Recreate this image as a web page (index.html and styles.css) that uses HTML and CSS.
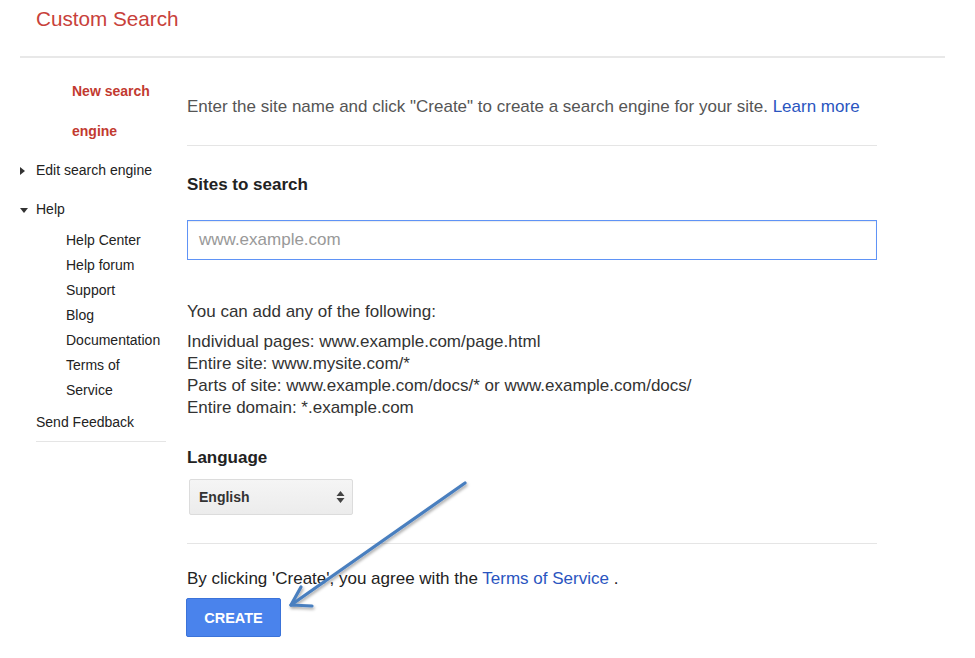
FILE: index.html
```html
<!DOCTYPE html>
<html>
<head>
<meta charset="utf-8">
<link rel="stylesheet" href="styles.css">
</head>
<body>
<header class="header">
  <h1 class="title">Custom Search</h1>
</header>
<div class="layout">
  <nav class="sidebar">
    <div class="nav-current">New search<br>engine</div>
    <div class="nav-item"><span class="tri tri-right"></span>Edit search engine</div>
    <div class="nav-item"><span class="tri tri-down"></span>Help</div>
    <ul class="subnav">
      <li>Help Center</li>
      <li>Help forum</li>
      <li>Support</li>
      <li>Blog</li>
      <li>Documentation</li>
      <li>Terms of<br>Service</li>
    </ul>
    <div class="nav-feedback">Send Feedback</div>
  </nav>
  <main class="main">
    <p class="intro">Enter the site name and click "Create" to create a search engine for your site. <a class="link" href="#">Learn more</a></p>
    <h2 class="label label-sites">Sites to search</h2>
    <div class="input">www.example.com</div>
    <p class="add-title">You can add any of the following:</p>
    <p class="examples">Individual pages: www.example.com/page.html<br>Entire site: www.mysite.com/*<br>Parts of site: www.example.com/docs/* or www.example.com/docs/<br>Entire domain: *.example.com</p>
    <h2 class="label label-lang">Language</h2>
    <div class="select"><span>English</span>
      <svg class="updown" width="9" height="14" viewBox="0 0 9 14"><path d="M4.5 1 L8.5 6 L0.5 6 Z M0.5 8 L8.5 8 L4.5 13 Z" fill="#444"/></svg>
    </div>
    <p class="agree">By clicking 'Create', you agree with the <a class="link" href="#">Terms of Service</a> .</p>
    <div class="button">CREATE</div>
  </main>
</div>
<svg class="arrow" width="975" height="658" viewBox="0 0 975 658">
  <defs>
    <filter id="sh" x="-20%" y="-20%" width="140%" height="140%">
      <feDropShadow dx="1" dy="2" stdDeviation="1.5" flood-color="#000" flood-opacity="0.35"/>
    </filter>
  </defs>
  <g filter="url(#sh)" stroke="#4a7fbf" stroke-width="3.2" fill="none" stroke-linecap="round" stroke-linejoin="round">
    <path d="M465 483 L291 605"/>
    <path d="M291 605 L301 587 M291 605 L312 606"/>
  </g>
</svg>
</body>
</html>
```
FILE: styles.css
```css
body {
  margin: 0;
  font-family: "Liberation Sans", Arial, sans-serif;
  background: #fff;
  color: #222;
}
.header {
  margin: 0 30px 0 20px;
  height: 56px;
  border-bottom: 2px solid #e8e8e8;
}
.title {
  margin: 0;
  padding: 7px 0 0 16px;
  font-size: 20.7px;
  font-weight: normal;
  color: #c8413a;
  line-height: 24px;
}
.layout {
  display: flex;
  padding-left: 20px;
}
.sidebar {
  width: 146px;
  padding-top: 13px;
  font-size: 14px;
  color: #222;
}
.nav-current {
  padding-left: 52px;
  color: #c23a30;
  font-weight: bold;
  line-height: 40px;
}
.nav-item {
  line-height: 39px;
  display: flex;
  align-items: center;
}
.tri {
  display: inline-block;
  width: 16px;
  height: 8px;
  position: relative;
}
.tri::before {
  content: "";
  position: absolute;
  left: 0;
  top: 0;
  border-style: solid;
}
.tri-right::before {
  border-width: 4px 0 4px 5px;
  border-color: transparent transparent transparent #333;
}
.tri-down::before {
  top: 2px;
  border-width: 5px 4px 0 4px;
  border-color: #333 transparent transparent transparent;
}
.subnav {
  list-style: none;
  margin: 0;
  padding: 0 0 0 46px;
  line-height: 25px;
  margin-top: -1px;
}
.nav-feedback {
  margin-left: 16px;
  margin-top: 3px;
  line-height: 32px;
  border-bottom: 1px solid #e5e5e5;
  padding-bottom: 3px;
}
.main {
  margin-left: 21px;
  width: 690px;
  padding-top: 39px;
}
.intro {
  margin: 0;
  font-size: 17px;
  color: #555;
  line-height: 20px;
  padding-bottom: 28px;
  border-bottom: 1px solid #e5e5e5;
}
.link {
  color: #2a55c0;
  text-decoration: none;
}
.label {
  margin: 0;
  font-size: 17px;
  font-weight: bold;
  color: #222;
  line-height: 20px;
}
.label-sites {
  margin-top: 29px;
}
.input {
  margin-top: 25px;
  height: 38px;
  border: 1px solid #5f93f6;
  box-shadow: inset 0 1px 1px rgba(0,0,0,0.08);
  font-size: 17px;
  color: #999;
  line-height: 38px;
  padding-left: 11px;
}
.add-title {
  margin: 42px 0 0;
  font-size: 17px;
  color: #333;
  line-height: 20px;
}
.examples {
  margin: 9px 0 0;
  font-size: 17px;
  color: #333;
  line-height: 22px;
}
.label-lang {
  margin-top: 29px;
}
.select {
  margin: 11px 0 0 2px;
  width: 164px;
  height: 36px;
  border: 1px solid #dcdcdc;
  border-radius: 2px;
  background: linear-gradient(#f5f5f5, #ececec);
  display: flex;
  align-items: center;
  justify-content: space-between;
  padding: 0 7px 0 9px;
  box-sizing: border-box;
  font-size: 14px;
  font-weight: bold;
  color: #333;
}
.agree {
  margin: 28px 0 0;
  padding-top: 25px;
  border-top: 1px solid #e5e5e5;
  font-size: 17px;
  color: #222;
  line-height: 20px;
}
.button {
  margin-top: 9px;
  width: 95px;
  height: 39px;
  box-sizing: border-box;
  background: #4a83ec;
  border: 1px solid #3b73d9;
  border-radius: 2px;
  color: #fff;
  font-weight: bold;
  font-size: 14.5px;
  display: flex;
  align-items: center;
  justify-content: center;
  margin-left: -1px;
}
.arrow {
  position: absolute;
  left: 0;
  top: 0;
  pointer-events: none;
}
```
